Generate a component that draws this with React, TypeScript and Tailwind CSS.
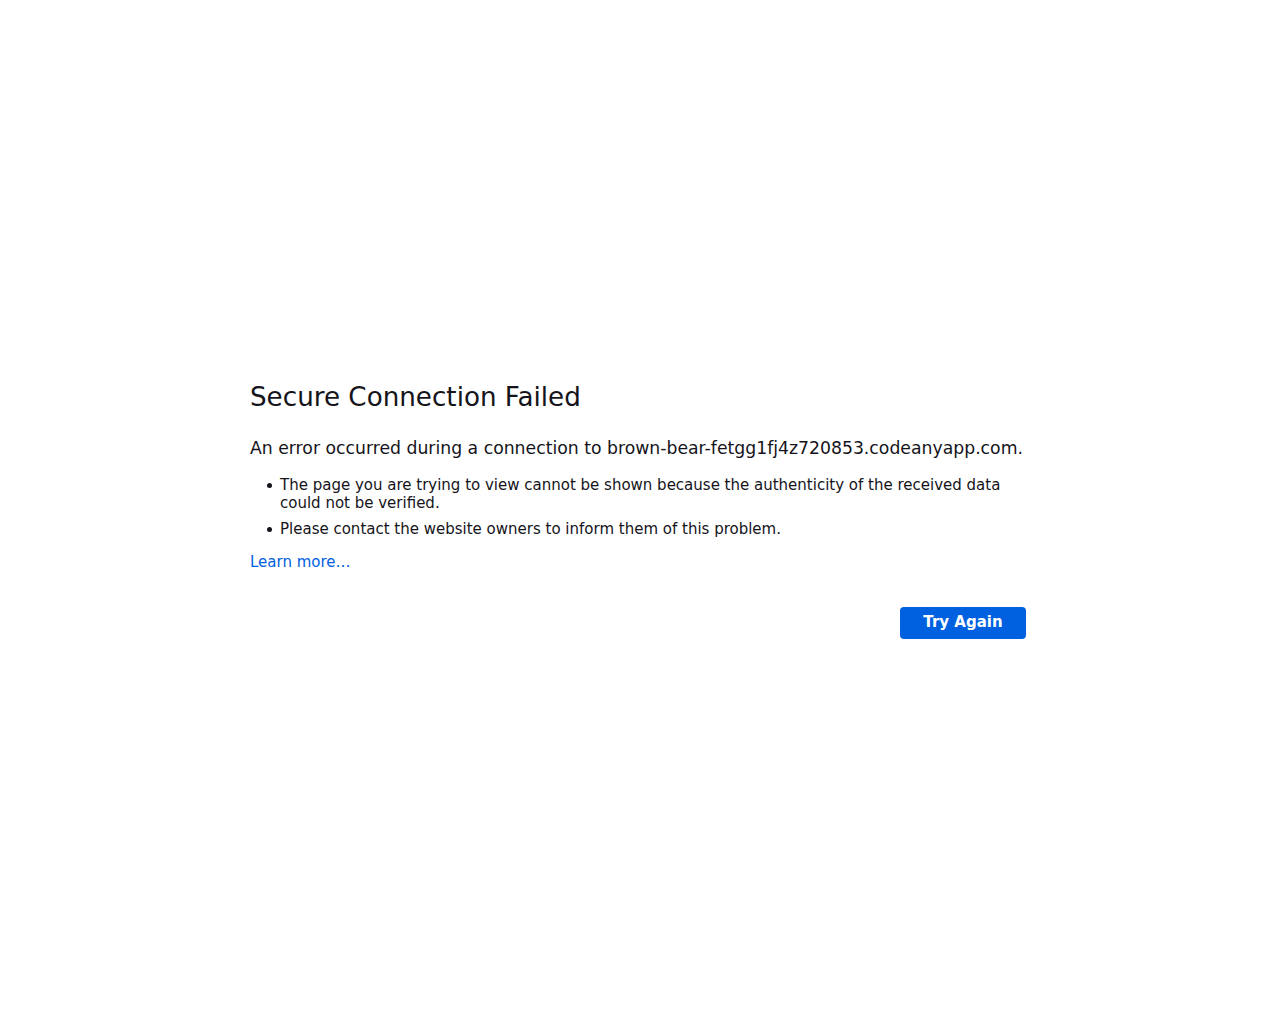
const items = [
  'The page you are trying to view cannot be shown because the authenticity of the received data could not be verified.',
  'Please contact the website owners to inform them of this problem.',
];

const App = () => {
  return (
    <div className="flex min-h-screen items-center justify-center bg-white font-['DejaVu_Sans',sans-serif] text-[#15141a]">
      <div className="w-[780px] pb-[3px]">
        <h1 className="text-[26.2px] leading-[1.2]">Secure Connection Failed</h1>
        <p className="mt-[24px] whitespace-nowrap text-[17.25px] leading-[1.2]">
          An error occurred during a connection to brown-bear-fetgg1fj4z720853.codeanyapp.com.
        </p>
        <ul className="mt-[17px] flex flex-col gap-[8px] text-[15px] leading-[18px]">
          {items.map((t, i) => (
            <li key={i} className="flex">
              <span className="ml-[17px] mr-[8px] mt-[7px] h-[5px] w-[5px] shrink-0 rounded-full bg-[#15141a]" />
              <span className="flex-1 pr-[20px]">{t}</span>
            </li>
          ))}
        </ul>
        <a href="#" className="mt-[15px] block text-[15px] leading-[18px] text-[#0061e0]">
          Learn more…
        </a>
        <div className="mt-[36px] flex justify-end pr-[4px]">
          <button className="h-[32px] w-[126px] rounded-[4px] bg-[#0061e0] text-[15px] font-bold text-white">
            Try Again
          </button>
        </div>
      </div>
    </div>
  );
};

export default App;
